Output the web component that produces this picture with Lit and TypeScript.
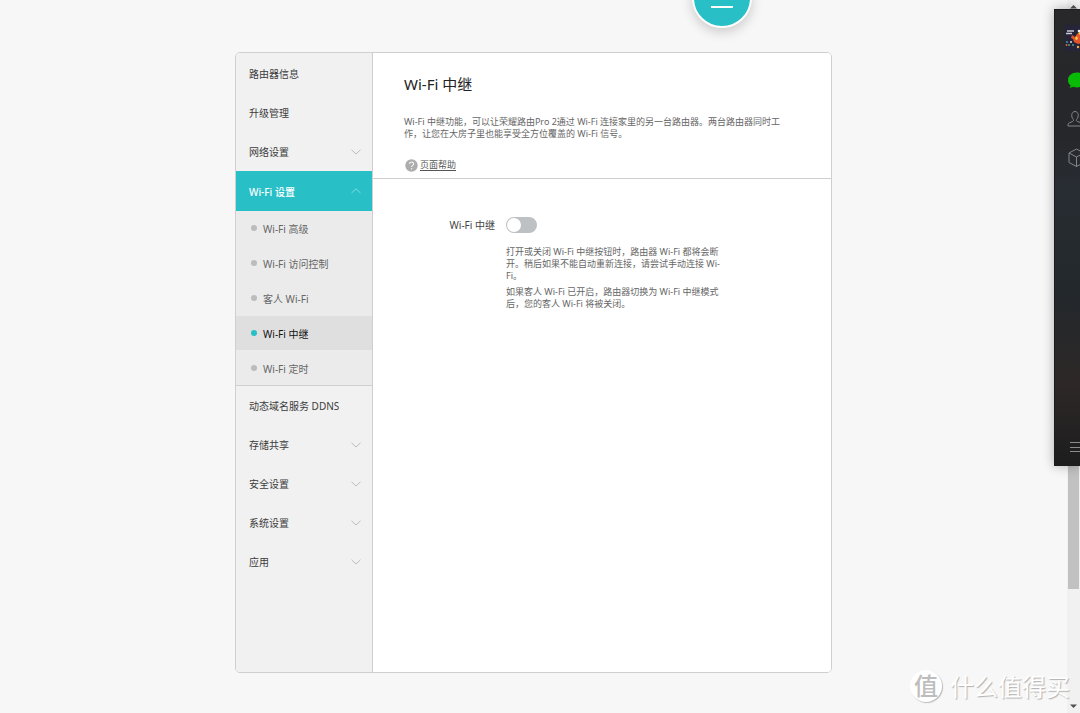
import { LitElement, html, css, svg, nothing } from "lit";
import { customElement, state } from "lit/decorators.js";
import { classMap } from "lit/directives/class-map.js";

interface MenuItem {
  label: string;
  expandable?: boolean;
  children?: string[];
}

const MENU: MenuItem[] = [
  { label: "路由器信息" },
  { label: "升级管理" },
  { label: "网络设置", expandable: true },
  {
    label: "Wi-Fi 设置",
    expandable: true,
    children: ["Wi-Fi 高级", "Wi-Fi 访问控制", "客人 Wi-Fi", "Wi-Fi 中继", "Wi-Fi 定时"],
  },
  { label: "动态域名服务 DDNS" },
  { label: "存储共享", expandable: true },
  { label: "安全设置", expandable: true },
  { label: "系统设置", expandable: true },
  { label: "应用", expandable: true },
];

@customElement("side-menu")
class SideMenu extends LitElement {
  @state() private current = "Wi-Fi 中继";

  static styles = css`
    :host {
      display: block;
      background: #f1f1f1;
      border-right: 1px solid #cfcfcf;
      padding-top: 1px;
    }
    ul {
      list-style: none;
      margin: 0;
      padding: 0;
    }
    button,
    a {
      box-sizing: border-box;
      width: 100%;
      display: flex;
      align-items: center;
      font: inherit;
      text-align: left;
      text-decoration: none;
      border: 0;
      background: none;
      cursor: pointer;
    }
    .top {
      height: 39px;
      padding: 0 11px 0 13px;
      justify-content: space-between;
      font-size: 10px;
      color: #3c3c3c;
    }
    .top.open {
      height: 40px;
      background: #29bfc7;
      color: #fff;
      font-weight: 500;
    }
    .chevron {
      width: 10px;
      height: 6px;
      fill: none;
      stroke: #bcbcbc;
      stroke-width: 1;
    }
    .open .chevron {
      stroke: #7fdbe0;
    }
    .sub {
      display: grid;
      gap: 1px;
      background: #ebebeb;
      border-bottom: 1px solid #cfcfcf;
    }
    .leaf {
      height: 34px;
      padding-left: 15px;
      gap: 6px;
      font-size: 10px;
      color: #666;
    }
    .dot {
      width: 6px;
      height: 6px;
      border-radius: 50%;
      background: #bcbcbc;
    }
    .leaf.current {
      background: #dfdfdf;
      color: #111;
    }
    .current .dot {
      background: #29bfc7;
    }
  `;

  private chevron(up: boolean) {
    return html`<svg class="chevron" viewBox="0 0 10 6" aria-hidden="true">
      ${up ? svg`<path d="M0.5 5 L5 0.8 L9.5 5" />` : svg`<path d="M0.5 0.8 L5 5 L9.5 0.8" />`}
    </svg>`;
  }

  private select(e: Event, name: string) {
    e.preventDefault();
    this.current = name;
  }

  render() {
    return html`<nav>
      <ul>
        ${MENU.map((item) => {
          const open = !!item.children;
          return html`<li>
            <button class=${classMap({ top: true, open })} type="button">
              <span>${item.label}</span>
              ${item.expandable ? this.chevron(open) : nothing}
            </button>
            ${item.children
              ? html`<ul class="sub">
                  ${item.children.map(
                    (name) => html`<li>
                      <a
                        class=${classMap({ leaf: true, current: name === this.current })}
                        href="#"
                        @click=${(e: Event) => this.select(e, name)}
                        ><span class="dot"></span><span>${name}</span></a
                      >
                    </li>`
                  )}
                </ul>`
              : nothing}
          </li>`;
        })}
      </ul>
    </nav>`;
  }
}

@customElement("repeater-page")
class RepeaterPage extends LitElement {
  @state() private enabled = false;

  static styles = css`
    :host {
      display: block;
      background: #fff;
      font-size: 9px;
      line-height: 12px;
      color: #666;
    }
    header {
      padding: 21px 39px 6px 31px;
      border-bottom: 1px solid #cfcfcf;
    }
    h1 {
      margin: 0 0 22px;
      font-size: 15px;
      line-height: 20px;
      font-weight: 400;
      color: #222;
    }
    p {
      margin: 0;
    }
    .help {
      display: flex;
      align-items: center;
      gap: 2px;
      height: 14px;
      margin-top: 18px;
      padding-left: 1px;
      color: #555;
      text-decoration: none;
    }
    .help span {
      text-decoration: underline;
      text-underline-offset: 2px;
    }
    .help svg {
      width: 13px;
      height: 13px;
    }
    .form {
      display: grid;
      grid-template-columns: 122px minmax(0, 227px);
      column-gap: 11px;
      row-gap: 13px;
      align-items: center;
      padding-top: 38px;
    }
    label {
      text-align: right;
      font-size: 10px;
      color: #444;
    }
    .switch {
      appearance: none;
      box-sizing: border-box;
      margin: 0;
      width: 31px;
      height: 16px;
      padding: 1px;
      border-radius: 8px;
      background: #bdc1c3;
      display: flex;
      align-items: center;
      cursor: pointer;
    }
    .switch::before {
      content: "";
      width: 14px;
      height: 14px;
      border-radius: 50%;
      background: #fff;
    }
    .switch:checked {
      background: #29bfc7;
      justify-content: flex-end;
    }
    .notes {
      grid-column: 2;
      display: grid;
      gap: 4px;
    }
  `;

  render() {
    return html`
      <header>
        <h1>Wi-Fi 中继</h1>
        <p>
          Wi-Fi 中继功能，可以让荣耀路由Pro 2通过 Wi-Fi
          连接家里的另一台路由器。两台路由器同时工作，让您在大房子里也能享受全方位覆盖的 Wi-Fi 信号。
        </p>
        <a class="help" href="#">
          <svg viewBox="0 0 13 13" aria-hidden="true">
            <circle cx="6.5" cy="6.5" r="6.2" fill="#adadad" />
            <path
              d="M4.5 5.1 C4.5 2.4 8.6 2.4 8.6 4.9 C8.6 6.4 6.6 6.3 6.6 8"
              fill="none"
              stroke="#f2f2f2"
              stroke-width="1.1"
            />
            <circle cx="6.6" cy="9.8" r="0.7" fill="#f2f2f2" />
          </svg>
          <span>页面帮助</span>
        </a>
      </header>
      <div class="form">
        <label for="repeater">Wi-Fi 中继</label>
        <input
          class="switch"
          id="repeater"
          type="checkbox"
          role="switch"
          .checked=${this.enabled}
          @change=${(e: Event) => (this.enabled = (e.target as HTMLInputElement).checked)}
        />
        <div class="notes">
          <p>打开或关闭 Wi-Fi 中继按钮时，路由器 Wi-Fi 都将会断开。稍后如果不能自动重新连接，请尝试手动连接 Wi-Fi。</p>
          <p>如果客人 Wi-Fi 已开启，路由器切换为 Wi-Fi 中继模式后，您的客人 Wi-Fi 将被关闭。</p>
        </div>
      </div>
    `;
  }
}

@customElement("chat-dock")
class ChatDock extends LitElement {
  static styles = css`
    :host {
      display: flex;
      flex-direction: column;
      box-sizing: border-box;
      width: 26px;
      height: 457px;
      padding: 15px 0 12px 10px;
      overflow: hidden;
      background: linear-gradient(#28282b 0, #26272a 28%, #282d33 38%, #23282c 62%, #2d2827 82%, #1d1d1e 100%);
      border: 1px solid #1c1c1e;
      border-right: 0;
      box-shadow: 0 0 12px rgba(0, 0, 0, 0.3);
    }
    svg {
      display: block;
      flex: none;
      fill: none;
      stroke: #85878a;
      stroke-width: 1;
    }
    .avatar {
      width: 26px;
      height: 26px;
      stroke: none;
    }
    .chat {
      width: 20px;
      height: 17px;
      margin: 21px 0 0 2px;
    }
    .person {
      width: 18px;
      height: 18px;
      margin: 21px 0 0 2px;
    }
    .cube {
      width: 18px;
      height: 20px;
      margin: 20px 0 0 3px;
    }
    .menu {
      width: 16px;
      height: 12px;
      margin: auto 0 0 5px;
    }
  `;

  render() {
    return html`
      <svg class="avatar" viewBox="0 0 26 26" aria-hidden="true">
        <rect width="26" height="26" fill="#25243a" />
        <path d="M2 6h7M1 8.500h6" stroke="#c9c9d4" stroke-width="1.4" />
        <path d="M7 10l3 2 2-3 3-2 5 3-2 8-5 1-4-2-1-3-2-1z" fill="#e2552b" />
        <path d="M10 13l2-2 1 3-2 1zM13 8l2-1v3z" fill="#ffd04a" />
        <circle cx="14" cy="6" r="1.300" fill="#eee" />
        <circle cx="2" cy="17" r="1" fill="#3d9e9a" />
        <circle cx="6" cy="17" r="1" fill="#ddd" />
        <circle cx="1.500" cy="20" r="0.900" fill="#d86c35" />
        <circle cx="4" cy="20" r="0.900" fill="#58b26c" />
        <circle cx="8" cy="20" r="0.900" fill="#4aa7a2" />
        <circle cx="13" cy="22" r="1.200" fill="#f1b13b" />
      </svg>
      <svg class="chat" viewBox="0 0 20 17" aria-hidden="true">
        <path
          d="M10 0.500C4.800 0.500 1 3.700 1 8c0 2.400 1 4.200 2.800 5.600L2.500 16l4-1.200c1 .4 2.200.6 3.500.6 5 0 9-3.100 9-7.400S15 .5 10 .5z"
          fill="#09bb07"
          stroke="none"
        />
      </svg>
      <svg class="person" viewBox="0 0 18 18" aria-hidden="true">
        <path
          d="M6.300 9.300C3.800 7 4.300 1.500 8 1.500s4.200 5.500 1.700 7.800c-.6.800-.3 1.700.8 2.200l3.500 1.300c1.200.5 1.500 1.200 1.500 3.200H1c0-2 .2-2.700 1.500-3.200L5.500 11.500c1.100-.5 1.400-1.400.8-2.200z"
        />
      </svg>
      <svg class="cube" viewBox="0 0 18 20" aria-hidden="true">
        <path d="M8.500 1L16 5v9.500L8.500 18.500 1 14.500V5zM1 5l7.500 4L16 5M8.500 9v9.500" />
      </svg>
      <svg class="menu" viewBox="0 0 16 12" aria-hidden="true">
        <path d="M0 1.500h16M0 6.500h16M0 10.500h16" stroke="#8a8b8c" />
      </svg>
    `;
  }
}

@customElement("app-root")
class AppRoot extends LitElement {
  static styles = css`
    :host {
      display: grid;
      grid-template-columns: minmax(0, 1fr) 13px;
      position: relative;
      min-height: 100vh;
      overflow: hidden;
      background: #f7f7f7;
      font-family: "Noto Sans", "Noto Sans CJK SC", sans-serif;
    }
    main {
      display: flex;
      justify-content: center;
      padding: 52px 16px 40px;
    }
    .card {
      box-sizing: border-box;
      width: 100%;
      max-width: 597px;
      display: grid;
      grid-template-columns: 137px minmax(0, 1fr);
      border: 1px solid #cfcfcf;
      border-radius: 5px;
      overflow: hidden;
    }
    .scrollbar {
      box-sizing: border-box;
      display: flex;
      flex-direction: column;
      align-items: center;
      justify-content: space-between;
      padding: 4px 0;
      background: #f1f1f1;
    }
    .scrollbar svg {
      width: 7px;
      height: 5px;
      fill: #505050;
    }
    .thumb {
      width: 11px;
      flex: 0 1 572px;
      margin: 8px 0 auto;
      background: #c1c1c1;
    }
    .bubble {
      position: absolute;
      top: -32px;
      left: calc(50% + 152px);
      box-sizing: border-box;
      width: 60px;
      height: 60px;
      padding: 6px 0 0;
      display: flex;
      align-items: center;
      justify-content: center;
      border: 2px solid #fff;
      border-radius: 50%;
      background: #29bfc7;
      box-shadow: 0 4px 12px rgba(0, 0, 0, 0.18);
    }
    .bar {
      width: 22px;
      height: 2px;
      margin-top: 12px;
      background: #fff;
    }
    .dock {
      position: absolute;
      top: 9px;
      right: 0;
    }
    .watermark {
      position: absolute;
      right: 10px;
      bottom: 10px;
      display: flex;
      align-items: center;
      gap: 8px;
      color: #fff;
      font-family: "Noto Sans CJK SC", sans-serif;
      font-size: 24px;
      line-height: 34px;
      text-shadow: 1px 1px 1px #b0b0b0;
    }
    .seal {
      width: 32px;
      height: 32px;
      border-radius: 50%;
      background: #fff;
      box-shadow: 1px 1px 1px #bbb;
      color: #bdbdbd;
      line-height: 30px;
      font-weight: 500;
      text-align: center;
      text-shadow: none;
    }
  `;

  render() {
    return html`
      <main>
        <div class="card">
          <side-menu></side-menu>
          <repeater-page></repeater-page>
        </div>
      </main>
      <div class="scrollbar" aria-hidden="true">
        <svg viewBox="0 0 7 5"><path d="M0 4.500L3.500 1 7 4.500z" /></svg>
        <div class="thumb"></div>
        <svg viewBox="0 0 7 5"><path d="M0 .5L3.500 4 7 .5z" /></svg>
      </div>
      <button class="bubble" type="button" aria-label="菜单"><span class="bar"></span></button>
      <chat-dock class="dock"></chat-dock>
      <div class="watermark"><span class="seal">值</span><span>什么值得买</span></div>
    `;
  }
}
